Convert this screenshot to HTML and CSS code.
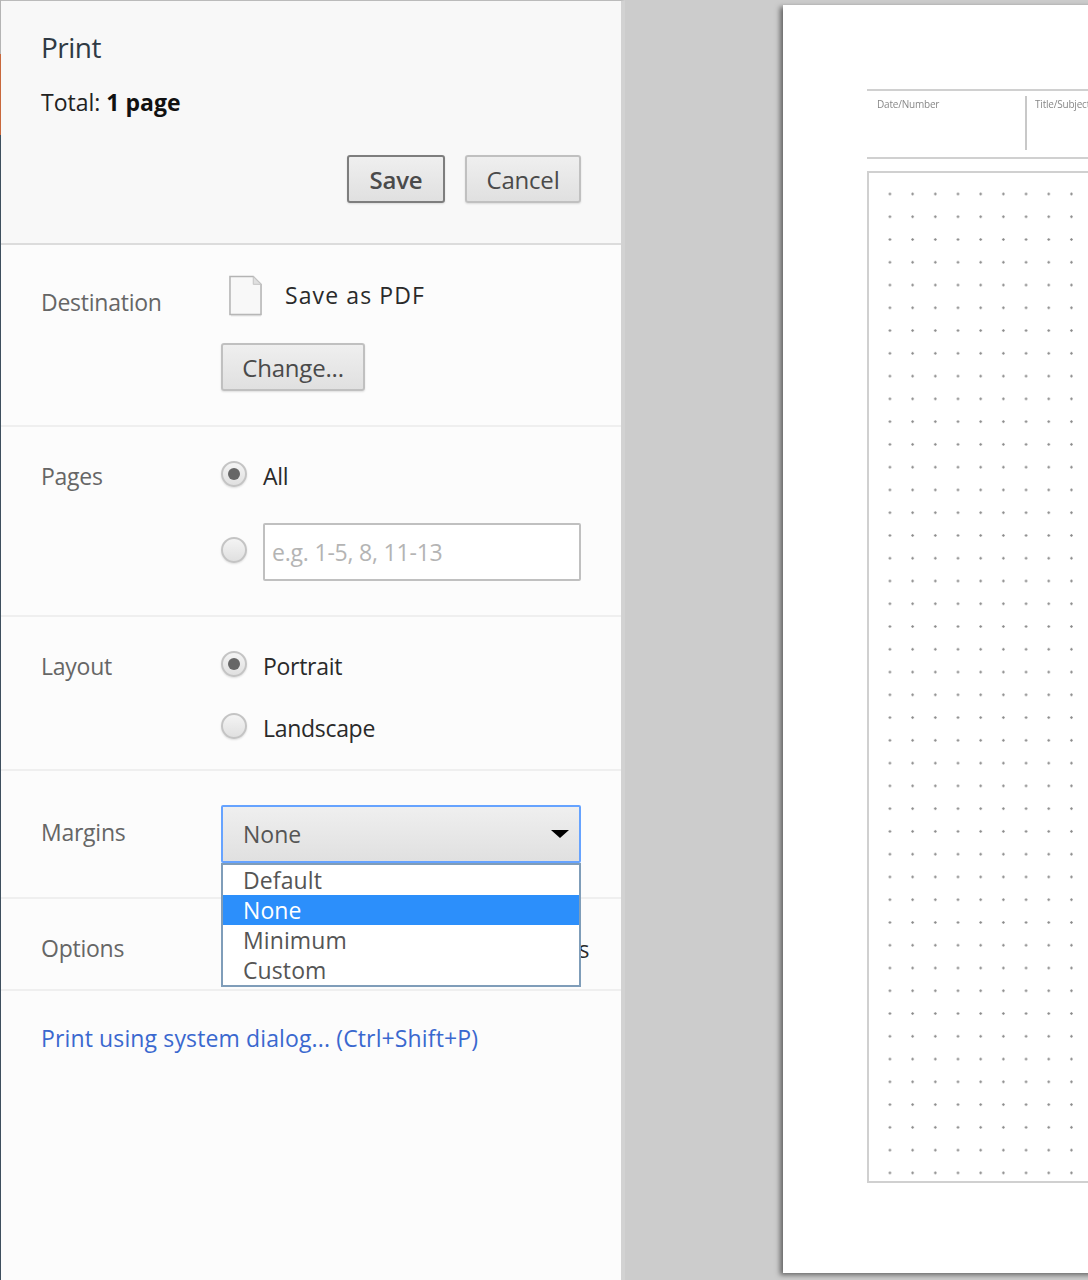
FILE: index.html
```html
<!DOCTYPE html>
<html lang="en">
<head>
<meta charset="utf-8">
<title>Print</title>
<link rel="stylesheet" href="styles.css">
</head>
<body>
<div class="app">
  <div class="accent"></div>
  <aside class="sidebar">
    <header class="head">
      <h1 class="title">Print</h1>
      <p class="total">Total: <b>1 page</b></p>
      <div class="actions">
        <button class="btn btn-save">Save</button>
        <button class="btn btn-cancel">Cancel</button>
      </div>
    </header>
    <section class="sec sec-dest">
      <div class="label label-dest">Destination</div>
      <div class="ctl">
        <div class="dest">
          <svg class="doc" width="33" height="42" viewBox="0 0 34 42"><path d="M1 1H25L33 9V40H1Z" fill="#f8f8f8" stroke="#b4b4b4" stroke-width="1.6"/><path d="M25 1V9H33Z" fill="#e0e0e0" stroke="#c4c4c4" stroke-width="1"/><path d="M2 41.2H33" stroke="#d8d8d8" stroke-width="1.4"/></svg>
          <span class="dest-name">Save as PDF</span>
        </div>
        <button class="btn btn-change">Change...</button>
      </div>
    </section>
    <section class="sec sec-pages">
      <div class="label">Pages</div>
      <div class="ctl">
        <div class="opt"><span class="radio on"></span><span>All</span></div>
        <div class="opt opt-range"><span class="radio"></span><input class="range" placeholder="e.g. 1-5, 8, 11-13"></div>
      </div>
    </section>
    <section class="sec sec-layout">
      <div class="label">Layout</div>
      <div class="ctl ctl-layout">
        <div class="opt"><span class="radio on"></span><span>Portrait</span></div>
        <div class="opt"><span class="radio"></span><span>Landscape</span></div>
      </div>
    </section>
    <section class="sec sec-margins">
      <div class="label">Margins</div>
      <div class="ctl select-wrap">
        <div class="select"><span>None</span><span class="caret"></span></div>
        <ul class="menu">
          <li>Default</li>
          <li class="sel">None</li>
          <li>Minimum</li>
          <li>Custom</li>
        </ul>
      </div>
    </section>
    <section class="sec sec-options">
      <div class="label">Options</div>
      <div class="ctl ctl-options">Headers and footers</div>
    </section>
    <a class="syslink" href="#">Print using system dialog... (Ctrl+Shift+P)</a>
  </aside>
  <main class="preview">
    <div class="paper">
      <div class="meta">
        <div class="meta-date">Date/Number</div>
        <div class="meta-title">Title/Subject</div>
      </div>
      <div class="dots"></div>
    </div>
  </main>
</div>
</body>
</html>
```
FILE: styles.css
```css
* { box-sizing: border-box; }
html, body { margin: 0; height: 100%; overflow: hidden; }
body { font-family: "Open Sans", "Noto Sans", sans-serif; color: #333; background: #ccc; }
.app { display: flex; width: 1088px; height: 1280px; overflow: hidden; }

.accent { width: 1px; flex: none; background: linear-gradient(#b4b4b4 0 54px, #c8683c 54px 135px, #3e4f5e 135px); }

.sidebar { width: 624px; flex: none; background: #fcfcfc; border-right: 4px solid #d2d2d2; border-top: 1px solid #bbb; font-size: 23px; }
.head { height: 244px; padding: 28px 0 0 40px; background: #f8f8f8; border-bottom: 2px solid #dcdcdc; }
.title { margin: 0; font-size: 28px; line-height: 36px; font-weight: 400; color: #2f3a44; letter-spacing: -0.5px; }
.total { margin: 21px 0 0; font-size: 23px; line-height: 32px; color: #222; letter-spacing: 0; }
.total b { font-weight: 700; color: #111; }
.actions { display: flex; justify-content: flex-end; gap: 20px; margin-top: 37px; padding-right: 40px; }

.btn { height: 48px; padding: 0; font: inherit; font-size: 24px; color: #4a4a4a; border: 2px solid #c0c0c0; border-radius: 3px; background: linear-gradient(#efefef, #e0e0e0); box-shadow: 0 1px 2px rgba(0,0,0,.12); letter-spacing: -0.2px; }
.btn-save { width: 98px; border-color: #7e7e7e; font-weight: 600; }
.btn-cancel { width: 116px; }
.btn-change { width: 144px; display: block; margin: 0; }

.sec { display: grid; grid-template-columns: 180px 360px; padding-left: 40px; border-bottom: 2px solid #efefef; }
.label { color: #666; line-height: 32px; letter-spacing: -0.25px; }
.ctl { color: #333; }

.sec-dest { height: 182px; padding-top: 30px; }
.label-dest { padding-top: 11px; }
.dest { display: flex; align-items: flex-start; height: 68px; padding-left: 8px; }
.doc { flex: none; }
.dest-name { margin-left: 23px; margin-top: 4px; line-height: 32px; color: #2a2a2a; letter-spacing: 1.1px; }

.sec-pages { height: 190px; padding-top: 33px; }
.opt { display: flex; align-items: center; gap: 16px; height: 32px; letter-spacing: -0.3px; color: #2a2a2a; }
.radio { width: 26px; height: 26px; margin-top: -4px; flex: none; border: 2px solid #c4c4c4; border-radius: 50%; background: linear-gradient(#f4f4f4, #e0e0e0); box-shadow: 0 1px 2px rgba(0,0,0,.12); display: grid; place-items: center; }
.radio.on::after { content: ""; width: 12px; height: 12px; border-radius: 50%; background: #666; }
.opt-range { height: 58px; margin-top: 31px; }
.range { width: 318px; height: 58px; padding: 0 7px; font: inherit; font-size: 23px; border: 2px solid #c0c0c0; border-radius: 2px; background: #fff; letter-spacing: -0.2px; }
.range::placeholder { color: #b4b4b4; opacity: 1; }

.sec-layout { height: 154px; padding-top: 33px; }
.ctl-layout { display: flex; flex-direction: column; gap: 30px; }

.sec-margins { height: 128px; padding-top: 34px; }
.sec-margins .label { margin-top: 11px; }
.select-wrap { position: relative; }
.select { display: flex; justify-content: space-between; align-items: center; height: 58px; padding: 0 10px 0 20px; color: #555; border: 2px solid #66a3ff; border-radius: 2px; background: linear-gradient(#efefef, #e0e0e0); letter-spacing: 0; }
.caret { width: 0; height: 0; border: 9px solid transparent; border-top: 8px solid #000; border-bottom: 0; }
.menu { position: absolute; z-index: 2; top: 58px; left: 0; width: 360px; margin: 0; padding: 0; list-style: none; background: #fff; border: 2px solid #7f9db9; color: #555; }
.menu li { height: 30px; padding-left: 20px; line-height: 31px; letter-spacing: 0.1px; }
.menu .sel { background: #2c8ffb; color: #fff; }

.sec-options { height: 92px; padding-top: 33px; }
.ctl-options { width: 368px; margin-top: 1px; text-align: right; line-height: 32px; color: #2a2a2a; letter-spacing: -0.5px; }

.syslink { display: block; margin: 31px 0 0 40px; line-height: 32px; color: #3a68cf; text-decoration: none; letter-spacing: 0.13px; }

.preview { flex: 1; min-width: 0; overflow: hidden; padding: 5px 0 0 158px; }
.paper { width: 700px; height: 1268px; padding: 84px 0 0 84px; background: #fff; box-shadow: -3px 2px 5px rgba(0,0,0,.5); }
.meta { display: flex; height: 70px; border-top: 2px solid #d0d0d0; border-bottom: 2px solid #d0d0d0; font-size: 10px; letter-spacing: -0.2px; color: #888; filter: blur(.4px); }
.meta-date { width: 158px; padding: 6px 0 0 10px; }
.meta-title { margin-top: 5px; height: 54px; padding: 1px 0 0 8px; border-left: 2px solid #c8c8c8; }
.dots { height: 1012px; margin-top: 12px; border: 2px solid #d0d0d0; background-color: #fff; background-image: radial-gradient(circle, #888 .9px, transparent 1.5px); background-size: 22.7px 22.77px; background-position: 9.6px 9.6px; }
```
